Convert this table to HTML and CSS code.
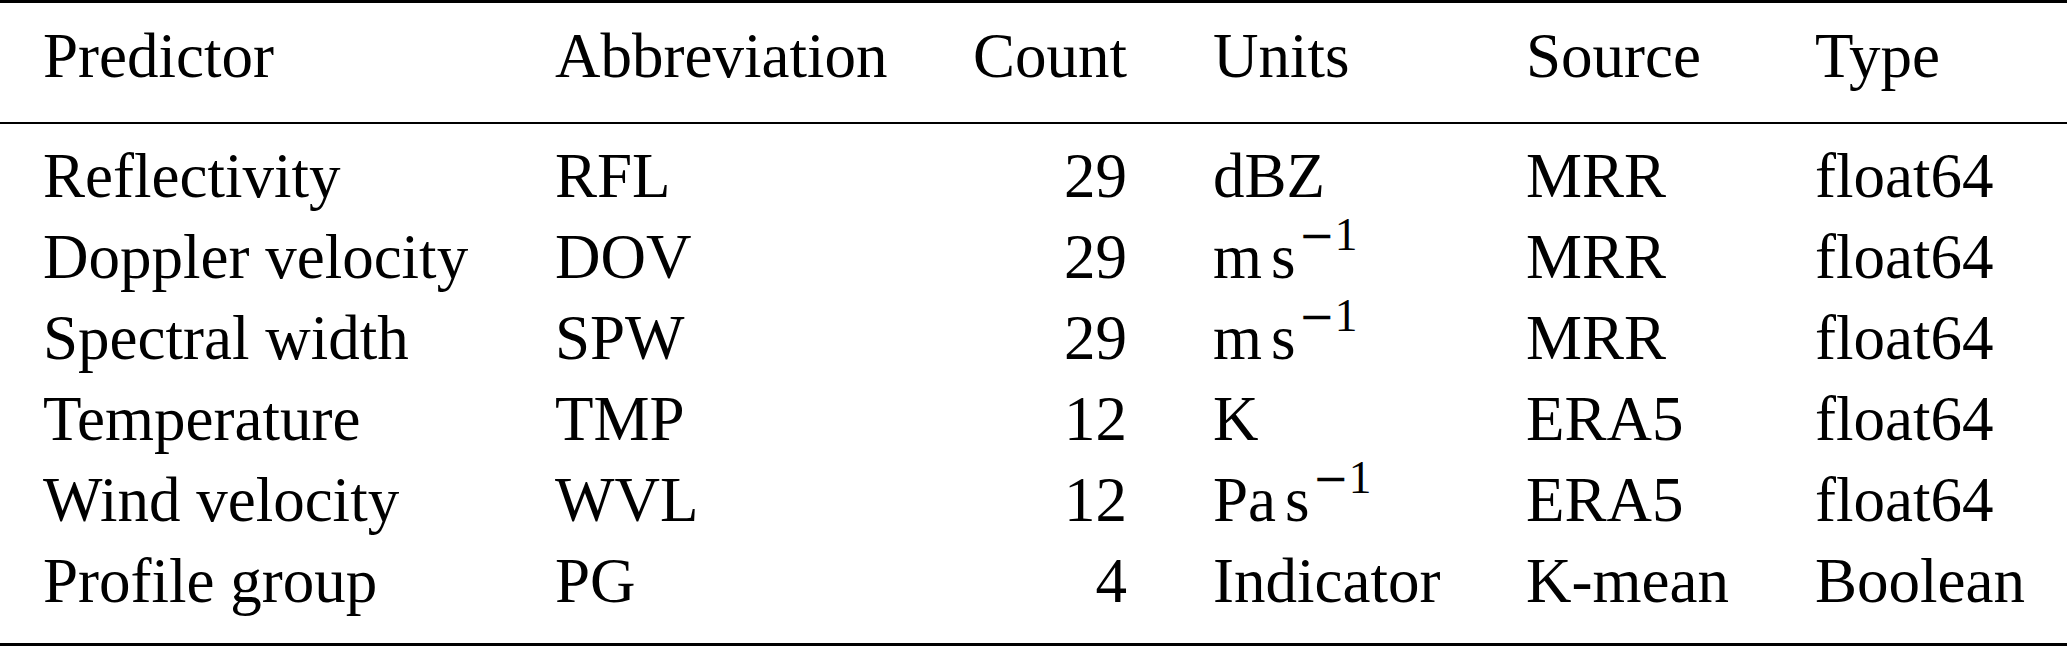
FILE: index.html
```html
<!DOCTYPE html>
<html lang="en">
<head>
<meta charset="utf-8">
<title>Predictors</title>
<link rel="stylesheet" href="styles.css">
</head>
<body>
<table class="predictors">
  <colgroup>
    <col class="c-pred">
    <col class="c-abbr">
    <col class="c-count">
    <col class="c-units">
    <col class="c-source">
    <col class="c-type">
  </colgroup>
  <thead>
    <tr>
      <th>Predictor</th>
      <th>Abbreviation</th>
      <th class="num">Count</th>
      <th>Units</th>
      <th>Source</th>
      <th>Type</th>
    </tr>
  </thead>
  <tbody>
    <tr class="first">
      <td>Reflectivity</td>
      <td>RFL</td>
      <td class="num">29</td>
      <td>dBZ</td>
      <td>MRR</td>
      <td>float64</td>
    </tr>
    <tr>
      <td>Doppler velocity</td>
      <td>DOV</td>
      <td class="num">29</td>
      <td>m<span class="thin"></span>s<sup><span class="minus">−</span>1</sup></td>
      <td>MRR</td>
      <td>float64</td>
    </tr>
    <tr>
      <td>Spectral width</td>
      <td>SPW</td>
      <td class="num">29</td>
      <td>m<span class="thin"></span>s<sup><span class="minus">−</span>1</sup></td>
      <td>MRR</td>
      <td>float64</td>
    </tr>
    <tr>
      <td>Temperature</td>
      <td>TMP</td>
      <td class="num">12</td>
      <td>K</td>
      <td>ERA5</td>
      <td>float64</td>
    </tr>
    <tr>
      <td>Wind velocity</td>
      <td>WVL</td>
      <td class="num">12</td>
      <td>Pa<span class="thin"></span>s<sup><span class="minus">−</span>1</sup></td>
      <td>ERA5</td>
      <td>float64</td>
    </tr>
    <tr class="last">
      <td>Profile group</td>
      <td>PG</td>
      <td class="num">4</td>
      <td>Indicator</td>
      <td>K-mean</td>
      <td>Boolean</td>
    </tr>
  </tbody>
</table>
</body>
</html>
```

FILE: styles.css
```css
html, body {
  margin: 0;
  padding: 0;
  background: #ffffff;
}

.predictors {
  width: 2067px;
  table-layout: fixed;
  border-collapse: separate;
  border-spacing: 0;
  font-family: "Liberation Serif", "Times New Roman", serif;
  font-size: 63px;
  line-height: 81px;
  color: #000000;
}

.c-pred { width: 512px; }
.c-abbr { width: 417px; }
.c-count { width: 241px; }
.c-units { width: 313px; }
.c-source { width: 289px; }
.c-type { width: 295px; }

.predictors th,
.predictors td {
  padding: 0 43px;
  text-align: left;
  font-weight: normal;
  white-space: nowrap;
  vertical-align: baseline;
}

.predictors th {
  border-top: 3px solid #000000;
  border-bottom: 2px solid #000000;
  padding-top: 13px;
  padding-bottom: 25px;
}

.predictors .num {
  text-align: right;
}

.predictors tr.first td {
  padding-top: 12px;
}

.predictors tr.last td {
  padding-bottom: 21px;
  border-bottom: 3px solid #000000;
}

.thin {
  display: inline-block;
  width: 9px;
}

.predictors sup {
  font-size: 0.72em;
  line-height: 0;
  vertical-align: 0.62em;
  margin-left: 3px;
}

.minus {
  font-family: "DejaVu Serif", "Liberation Serif", serif;
  font-size: 0.95em;
  font-weight: 300;
}
```
